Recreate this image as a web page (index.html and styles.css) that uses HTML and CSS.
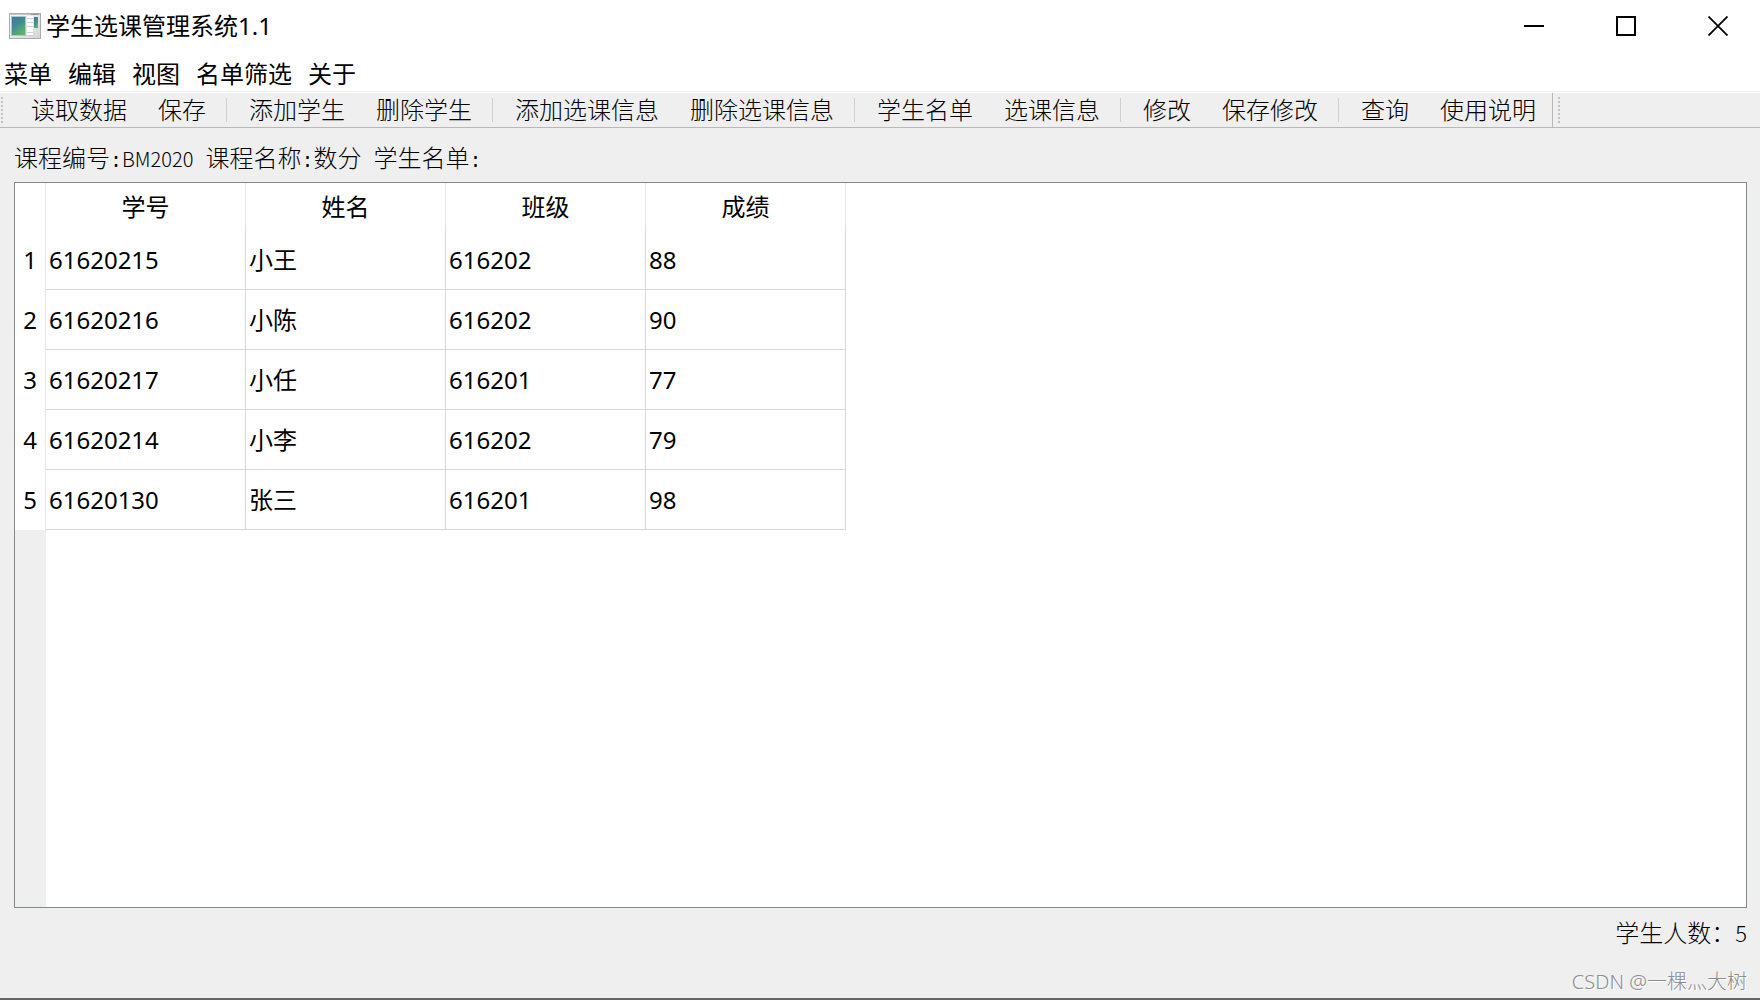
FILE: index.html
```html
<!DOCTYPE html>
<html lang="zh-CN">
<head>
<meta charset="utf-8">
<meta name="viewport" content="width=device-width, initial-scale=1">
<title>学生选课管理系统1.1</title>
<link rel="stylesheet" href="styles.css">
</head>
<body>
<div class="window">
  <header class="titlebar">
    <svg class="app-icon" width="32" height="26" viewBox="0 0 32 26" aria-hidden="true">
      <defs>
        <linearGradient id="pane" x1="0" y1="0" x2="0.6" y2="1">
          <stop offset="0" stop-color="#41719f"/>
          <stop offset="0.5" stop-color="#3f8c94"/>
          <stop offset="1" stop-color="#5fb56b"/>
        </linearGradient>
        <linearGradient id="frame" x1="0" y1="0" x2="1" y2="1">
          <stop offset="0" stop-color="#fafafa"/>
          <stop offset="1" stop-color="#d5d5d5"/>
        </linearGradient>
      </defs>
      <rect x="0.5" y="0.5" width="31" height="25" fill="url(#frame)" stroke="#a9abae"/>
      <path d="M1 1.5H31" stroke="#c3c8d2"/>
      <path d="M22 1.5H30" stroke="#8d98ac"/>
      <rect x="2.5" y="3.5" width="14" height="19" fill="url(#pane)" stroke="#a8c7cf"/>
      <rect x="18" y="3" width="6" height="20" fill="#fff"/>
      <rect x="25" y="4" width="4" height="11" fill="url(#pane)"/>
      <path d="M18 5.5H24M18 9.5H24M18 13.5H24M18 19.5H24M18 22.5H24" stroke="#cfcfcf"/>
    </svg>
    <h1 class="title">学生选课管理系统1.1</h1>
    <div class="controls">
      <button class="control" type="button" aria-label="最小化">
        <svg width="20" height="20" viewBox="0 0 20 20"><path d="M0 10H20" stroke="#000" stroke-width="2"/></svg>
      </button>
      <button class="control" type="button" aria-label="最大化">
        <svg width="20" height="20" viewBox="0 0 20 20"><rect x="1" y="1" width="18" height="18" fill="none" stroke="#000" stroke-width="2"/></svg>
      </button>
      <button class="control" type="button" aria-label="关闭">
        <svg width="20" height="20" viewBox="0 0 20 20"><path d="M0.5 0.5L19.5 19.5M19.5 0.5L0.5 19.5" stroke="#000" stroke-width="1.8"/></svg>
      </button>
    </div>
  </header>

  <nav class="menubar">
    <button class="menu" type="button">菜单</button>
    <button class="menu" type="button">编辑</button>
    <button class="menu" type="button">视图</button>
    <button class="menu" type="button">名单筛选</button>
    <button class="menu" type="button">关于</button>
  </nav>

  <div class="toolbars">
    <div class="toolbar" role="toolbar">
      <span class="grip"></span>
      <button class="tool" type="button">读取数据</button>
      <button class="tool" type="button">保存</button>
      <span class="separator"></span>
      <button class="tool" type="button">添加学生</button>
      <button class="tool" type="button">删除学生</button>
      <span class="separator"></span>
      <button class="tool" type="button">添加选课信息</button>
      <button class="tool" type="button">删除选课信息</button>
      <span class="separator"></span>
      <button class="tool" type="button">学生名单</button>
      <button class="tool" type="button">选课信息</button>
      <span class="separator"></span>
      <button class="tool" type="button">修改</button>
      <button class="tool" type="button">保存修改</button>
      <span class="separator"></span>
      <button class="tool" type="button">查询</button>
      <button class="tool" type="button">使用说明</button>
    </div>
    <div class="toolbar toolbar-empty" role="toolbar">
      <span class="grip"></span>
    </div>
  </div>

  <main class="content">
    <p class="caption">课程编号<span class="half">:</span><span class="code">BM2020</span><span class="half"> </span>课程名称<span class="half">:</span>数分<span class="half"> </span>学生名单<span class="half">:</span></p>
    <div class="table-frame">
      <table class="grid">
        <colgroup><col class="col-index"><col class="col-data"><col class="col-data"><col class="col-data"><col class="col-data"></colgroup>
        <thead>
          <tr><td class="corner"></td><th scope="col">学号</th><th scope="col">姓名</th><th scope="col">班级</th><th scope="col">成绩</th></tr>
        </thead>
        <tbody>
          <tr><th scope="row">1</th><td>61620215</td><td>小王</td><td>616202</td><td>88</td></tr>
          <tr><th scope="row">2</th><td>61620216</td><td>小陈</td><td>616202</td><td>90</td></tr>
          <tr><th scope="row">3</th><td>61620217</td><td>小任</td><td>616201</td><td>77</td></tr>
          <tr><th scope="row">4</th><td>61620214</td><td>小李</td><td>616202</td><td>79</td></tr>
          <tr><th scope="row">5</th><td>61620130</td><td>张三</td><td>616201</td><td>98</td></tr>
        </tbody>
      </table>
      <div class="gutter"></div>
    </div>
    <p class="count">学生人数：<span class="count-value">5</span></p>
  </main>

  <footer class="credit">CSDN @一棵灬大树</footer>
</div>
</body>
</html>
```
FILE: styles.css
```css
* {
  box-sizing: border-box;
}

body {
  margin: 0;
  background: #efefef;
  color: #000;
  font-family: "Noto Sans", "Noto Sans CJK SC", sans-serif;
  font-size: 24px;
  line-height: 32px;
}

button {
  margin: 0;
  border: 0;
  background: none;
  color: inherit;
  font: inherit;
  white-space: nowrap;
}

.window {
  display: flex;
  flex-direction: column;
  min-height: 100vh;
  border-bottom: 2px solid #666;
}

.titlebar {
  display: flex;
  align-items: center;
  height: 52px;
  padding-left: 9px;
  background: #fff;
}

.title {
  flex: 1;
  margin: 0;
  padding-left: 5px;
  font-size: 24px;
  font-weight: 400;
}

.controls {
  display: flex;
  gap: 8px;
}

.control {
  display: flex;
  align-items: center;
  justify-content: center;
  width: 84px;
  height: 52px;
  padding: 0;
}

.menubar {
  display: flex;
  gap: 16px;
  height: 40px;
  padding: 6px 4px 0;
  border-bottom: 1px solid #f0f0f0;
  background: #fff;
}

.menu {
  height: 32px;
  padding: 0;
}

.toolbars {
  display: flex;
  height: 36px;
  border-top: 1px solid #fff;
  border-bottom: 1px solid #b8b8b8;
}

.toolbar {
  display: flex;
  align-items: center;
  gap: 1px;
  padding: 0 1px;
  border-right: 1px solid #b8b8b8;
}

.toolbar-empty {
  flex: 1;
  padding-left: 5px;
  border-right: 0;
}

.grip {
  width: 2px;
  height: 26px;
  margin-right: 12px;
  background: repeating-linear-gradient(#c2c2c2 0 2px, transparent 2px 4px);
}

.tool {
  padding: 0 15px 2px;
}

.tool,
.caption,
.count {
  font-family: "Noto Sans CJK SC", sans-serif;
  font-weight: 300;
}

.separator {
  width: 1px;
  height: 24px;
  margin: 0 6px 0 4px;
  background: #cfcfcf;
}

.content {
  display: flex;
  flex: 1;
  flex-direction: column;
  padding: 13px 13px 0 14px;
}

.caption {
  height: 32px;
  margin: 0 0 9px;
}

.half {
  font-family: "Liberation Mono", monospace;
  font-size: 20px;
  line-height: 20px;
  white-space: pre;
}

.code {
  font-size: 20px;
  line-height: 20px;
}

.table-frame {
  display: flex;
  flex: 1;
  flex-direction: column;
  border: 1px solid #828790;
  background: #fff;
}

.grid {
  width: 831px;
  border-collapse: separate;
  border-spacing: 0;
  table-layout: fixed;
}

.col-index {
  width: 31px;
}

.col-data {
  width: 200px;
}

.grid th,
.grid td {
  height: 60px;
  padding: 0 3px;
  border-right: 1px solid #d8d8d8;
  border-bottom: 1px solid #d8d8d8;
  font-weight: 400;
  text-align: left;
}

.grid thead th,
.grid thead td {
  height: 47px;
  border-right-color: #e5e5e5;
  border-bottom: 0;
  text-align: center;
}

.grid tbody th {
  padding: 0;
  border-right-color: #e5e5e5;
  border-bottom: 0;
  text-align: center;
}

.gutter {
  flex: 1;
  width: 31px;
  background: #efefef;
}

.count {
  margin: 0;
  padding-top: 8px;
  text-align: right;
}

.count-value {
  font-size: 22px;
}

.credit {
  height: 50px;
  padding: 24px 13px 0;
  color: #8c8c8c;
  font-size: 20px;
  font-weight: 300;
  line-height: 20px;
  text-align: right;
  text-shadow: 1px 1px #fff;
}
```
